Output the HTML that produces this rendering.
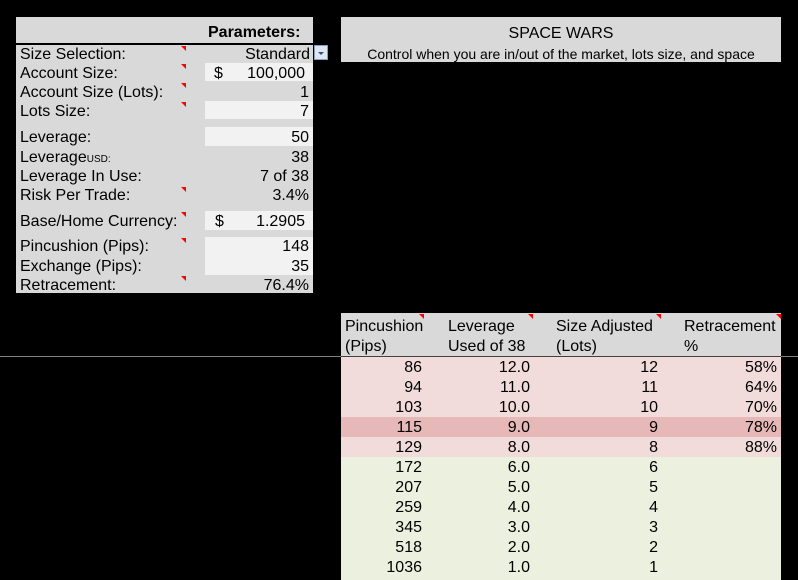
<!DOCTYPE html>
<html><head><style>
body{margin:0;width:798px;height:580px;background:#000;position:relative;overflow:hidden;font-family:"Liberation Sans",sans-serif;font-size:16px;color:#000}
.a{position:absolute}
.t{position:absolute;line-height:19px;white-space:nowrap;margin-top:1px}
.r{text-align:right}
.box{position:absolute;background:#f2f2f2}
.tri{position:absolute;width:0;height:0;border-top:5px solid #f00;border-left:5px solid transparent}
.row{position:absolute;left:341px;width:440px;height:20px}
.row div{position:absolute;line-height:20px;text-align:right;top:1px}
</style></head><body>
<div class="a" style="left:16px;top:17px;width:297px;height:276px;background:#d9d9d9"></div>
<div class="a" style="left:16px;top:43px;width:297px;height:2px;background:#000"></div>
<div class="t" style="left:208px;top:22px;font-weight:bold">Parameters:</div>
<div class="box" style="left:205px;top:63px;width:108px;height:18px"></div>
<div class="box" style="left:205px;top:101px;width:108px;height:18px"></div>
<div class="box" style="left:205px;top:127px;width:108px;height:19px"></div>
<div class="box" style="left:205px;top:211px;width:108px;height:19px"></div>
<div class="box" style="left:205px;top:237px;width:108px;height:38px"></div>
<div class="t" style="left:20px;top:44px">Size Selection:</div>
<div class="t" style="left:20px;top:63px">Account Size:</div>
<div class="t" style="left:20px;top:82px">Account Size (Lots):</div>
<div class="t" style="left:20px;top:101px">Lots Size:</div>
<div class="t" style="left:20px;top:127px">Leverage:</div>
<div class="t" style="left:20px;top:147px">Leverage<span style="font-size:10px">USD:</span></div>
<div class="t" style="left:20px;top:166px">Leverage In Use:</div>
<div class="t" style="left:20px;top:185px">Risk Per Trade:</div>
<div class="t" style="left:20px;top:211px">Base/Home Currency:</div>
<div class="t" style="left:20px;top:236px">Pincushion (Pips):</div>
<div class="t" style="left:20px;top:256px">Exchange (Pips):</div>
<div class="t" style="left:20px;top:275px">Retracement:</div>
<div class="tri" style="left:181px;top:46px"></div>
<div class="tri" style="left:181px;top:64px"></div>
<div class="tri" style="left:181px;top:83px"></div>
<div class="tri" style="left:181px;top:102px"></div>
<div class="tri" style="left:181px;top:187px"></div>
<div class="tri" style="left:181px;top:212px"></div>
<div class="tri" style="left:181px;top:238px"></div>
<div class="tri" style="left:181px;top:276px"></div>
<div class="t r" style="right:488px;top:44px">Standard</div>
<div class="a" style="left:314px;top:45px;width:14px;height:15px;background:#dfe6f3;border:1px solid #8a9bbb;box-sizing:border-box"><div class="a" style="left:3px;top:6px;border-top:3px solid #3c4a6b;border-left:3px solid transparent;border-right:3px solid transparent"></div></div>
<div class="t" style="left:214px;top:63px">$</div>
<div class="t r" style="right:493px;top:63px">100,000</div>
<div class="t r" style="right:489px;top:82px">1</div>
<div class="t r" style="right:489px;top:101px">7</div>
<div class="t r" style="right:489px;top:127px">50</div>
<div class="t r" style="right:489px;top:147px">38</div>
<div class="t r" style="right:489px;top:166px">7 of 38</div>
<div class="t r" style="right:489px;top:185px">3.4%</div>
<div class="t" style="left:215px;top:211px">$</div>
<div class="t r" style="right:493px;top:211px">1.2905</div>
<div class="t r" style="right:489px;top:236px">148</div>
<div class="t r" style="right:489px;top:256px">35</div>
<div class="t r" style="right:489px;top:275px">76.4%</div>

<div class="a" style="left:341px;top:17px;width:440px;height:45px;background:#d9d9d9"></div>
<div class="t" style="left:341px;width:440px;top:23px;text-align:center">SPACE WARS</div>
<div class="t" style="left:341px;width:440px;top:44px;text-align:center;font-size:14px">Control when you are in/out of the market, lots size, and space</div>

<div class="a" style="left:341px;top:313px;width:440px;height:44px;background:#d9d9d9"></div>
<div class="a" style="left:0;top:356px;width:798px;height:1px;background:#808080"></div>
<div class="a" style="left:341px;top:356px;width:440px;height:1px;background:#404040"></div>
<div class="t" style="left:345px;top:316px;line-height:20px">Pincushion<br>(Pips)</div>
<div class="t" style="left:448px;top:316px;line-height:20px">Leverage<br>Used of 38</div>
<div class="t" style="left:556px;top:316px;line-height:20px">Size Adjusted<br>(Lots)</div>
<div class="t" style="left:684px;top:316px;line-height:20px">Retracement<br>%</div>
<div class="tri" style="left:419px;top:314px"></div>
<div class="tri" style="left:528px;top:314px"></div>
<div class="tri" style="left:656px;top:314px"></div>
<div class="tri" style="left:776px;top:314px"></div>

<div class="row" style="top:357px;background:#f2dcdb"><div style="right:359px">86</div><div style="right:251px">12.0</div><div style="right:123px">12</div><div style="right:4px">58%</div></div>
<div class="row" style="top:377px;background:#f2dcdb"><div style="right:359px">94</div><div style="right:251px">11.0</div><div style="right:123px">11</div><div style="right:4px">64%</div></div>
<div class="row" style="top:397px;background:#f2dcdb"><div style="right:359px">103</div><div style="right:251px">10.0</div><div style="right:123px">10</div><div style="right:4px">70%</div></div>
<div class="row" style="top:417px;background:#e6b8b7"><div style="right:359px">115</div><div style="right:251px">9.0</div><div style="right:123px">9</div><div style="right:4px">78%</div></div>
<div class="row" style="top:437px;background:#f2dcdb"><div style="right:359px">129</div><div style="right:251px">8.0</div><div style="right:123px">8</div><div style="right:4px">88%</div></div>
<div class="row" style="top:457px;background:#ebf1de"><div style="right:359px">172</div><div style="right:251px">6.0</div><div style="right:123px">6</div></div>
<div class="row" style="top:477px;background:#ebf1de"><div style="right:359px">207</div><div style="right:251px">5.0</div><div style="right:123px">5</div></div>
<div class="row" style="top:497px;background:#ebf1de"><div style="right:359px">259</div><div style="right:251px">4.0</div><div style="right:123px">4</div></div>
<div class="row" style="top:517px;background:#ebf1de"><div style="right:359px">345</div><div style="right:251px">3.0</div><div style="right:123px">3</div></div>
<div class="row" style="top:537px;background:#ebf1de"><div style="right:359px">518</div><div style="right:251px">2.0</div><div style="right:123px">2</div></div>
<div class="row" style="top:557px;height:23px;background:#ebf1de"><div style="right:359px">1036</div><div style="right:251px">1.0</div><div style="right:123px">1</div></div>
</body></html>
